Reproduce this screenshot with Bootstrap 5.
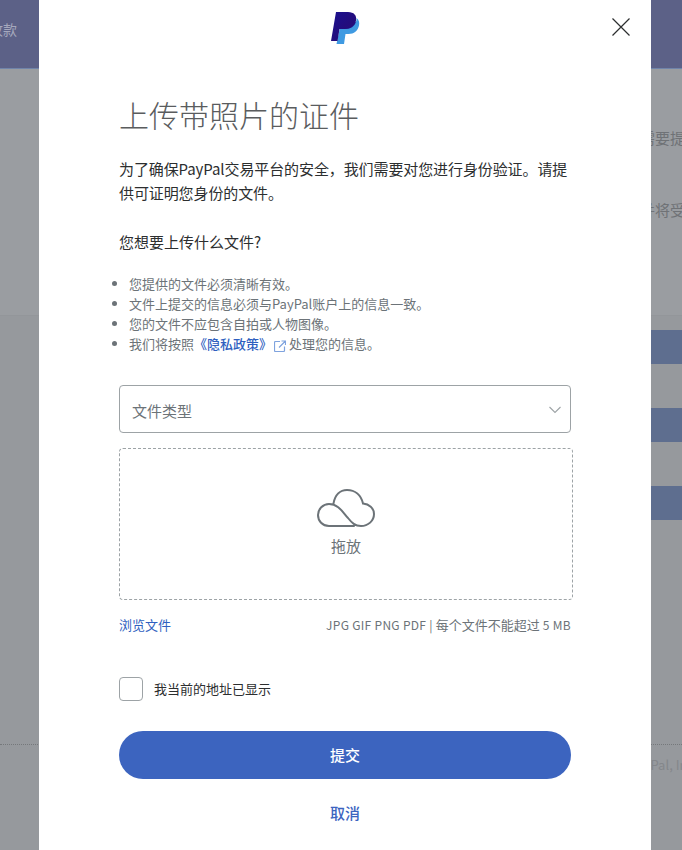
<!DOCTYPE html>
<html lang="zh-CN">
<head>
    <meta charset="UTF-8">
    <meta name="viewport" content="width=device-width, initial-scale=1.0">
    <title>上传带照片的证件</title>
    <link href="https://cdn.jsdelivr.net/npm/bootstrap@5.3.0/dist/css/bootstrap.min.css" rel="stylesheet">
    <style>
        html, body {
            height: 850px;
            overflow: hidden;
        }
        body {
            font-family: "Noto Sans CJK SC", "Noto Sans", sans-serif;
            font-size: 15px;
            line-height: 24px;
            color: #2c2e2f;
        }
        .behind {
            height: 850px;
            overflow: hidden;
            background: #96999d;
            color: #6f7276;
            white-space: nowrap;
        }
        .behind-top {
            height: 69px;
            background: #5c6187;
            border-bottom: 1px solid #7084aa;
            color: #a5a8bd;
            font-size: 14px;
            padding-top: 17px;
        }
        .behind-top-text {
            width: 17px;
            justify-content: flex-end;
        }
        .behind-upper {
            height: 247px;
            background: #9a9da1;
            border-bottom: 1px solid #93969a;
            overflow: hidden;
        }
        .behind-line-a { margin: 57px 0 0 625px; }
        .behind-line-b { margin: 48px 0 0 640px; }
        .behind-band {
            height: 34px;
            margin: 44px 0 0 300px;
            background: #5e6e8f;
        }
        .behind-band.first { margin-top: 14px; }
        .behind-rule {
            margin-top: 224px;
            border-top: 1px dotted #75787b;
            padding: 8px 0 0 618px;
            font-size: 13px;
            color: #84878b;
        }
        .sheet-layer {
            position: absolute;
            inset: 0;
        }
        .sheet {
            position: relative;
            width: 612px;
            height: 850px;
            margin-left: 39px;
            padding: 0 80px;
            overflow: hidden;
            background: #fff;
        }
        .sheet-logo {
            display: block;
            margin: 10px auto 0;
        }
        .sheet-close {
            position: absolute;
            top: 18px;
            right: 21px;
            display: block;
            line-height: 0;
        }
        .sheet-title {
            margin: 48px 0 0;
            font-size: 30px;
            font-weight: 300;
            line-height: 40px;
            color: #5a5c5e;
        }
        .sheet-intro {
            margin: 23px 0 0;
            letter-spacing: -.1px;
        }
        .sheet-question { margin: 25px 0 0; }
        .rules {
            margin: 20px 0 0;
            padding-left: 10px;
            font-size: 13px;
            line-height: 20px;
            color: #6c7378;
            list-style-position: outside;
        }
        .rules a, .link-blue {
            color: #2f5fc0;
            text-decoration: none;
        }
        .rules a { font-weight: 500; }
        .ext-icon {
            vertical-align: -3px;
            margin: 0 3px 0 2px;
        }
        .doc-select {
            height: 48px;
            margin-top: 31px;
            padding: 5px 40px 0 12px;
            font-size: 15px;
            color: #6c7378;
            border: 1px solid #9da3a6;
            border-radius: 4px;
            background-position: right 9px top 20px;
            background-size: 12px 8px;
            background-image: url("data:image/svg+xml,%3csvg xmlns='http://www.w3.org/2000/svg' viewBox='0 0 12 8'%3e%3cpath fill='none' stroke='%239da3a6' stroke-width='1.1' d='M.5 1l5.500 5.500L11.500 1'/%3e%3c/svg%3e");
        }
        .drop-area {
            width: 454px;
            height: 152px;
            margin-top: 15px;
            padding-top: 40px;
            border: 1px dashed #9da3a6;
            border-radius: 4px;
            color: #6c7378;
            font-size: 15px;
        }
        .drop-area span { margin-top: 7px; }
        .browse-row {
            margin-top: 15px;
            font-size: 13px;
            line-height: 20px;
            color: #6c7378;
        }
        .file-hint {
            font-size: 12px;
            letter-spacing: .3px;
        }
        .file-hint-cjk {
            font-size: 13px;
            letter-spacing: 0;
        }
        .confirm-row {
            margin-top: 42px;
            font-size: 13px;
        }
        .confirm-box.form-check-input {
            width: 24px;
            height: 24px;
            margin: 0 11px 0 0;
            border: 1px solid #9da3a6;
            border-radius: 4px;
        }
        .submit-btn {
            height: 48px;
            margin-top: 30px;
            font-size: 15px;
            font-weight: 500;
            color: #fff;
            background: #3c64bf;
            border: 0;
        }
        .cancel-link {
            display: block;
            margin-top: 22px;
            font-weight: 500;
            color: #3c64bf;
            text-decoration: none;
        }
    </style>
</head>
<body class="position-relative">

    <div class="behind">
        <div class="behind-top"><div class="behind-top-text d-flex">收款</div></div>
        <div class="behind-upper">
            <div class="behind-line-a">您需要提供</div>
            <div class="behind-line-b">并将受到</div>
        </div>
        <div class="behind-band first"></div>
        <div class="behind-band"></div>
        <div class="behind-band"></div>
        <div class="behind-rule">©PayPal, Inc.</div>
    </div>

    <div class="sheet-layer d-flex">
        <div class="sheet">
            <svg class="sheet-logo" width="32" height="36" viewBox="0 0 32 36" role="img" aria-label="PayPal">
                <defs>
                    <linearGradient id="ppDark" x1="0" y1="0" x2="1" y2="1">
                        <stop offset="0" stop-color="#1a1090"/>
                        <stop offset="1" stop-color="#2a0a6e"/>
                    </linearGradient>
                </defs>
                <path fill="#3f9ae2" d="M7.500 34 12 13h12c3 0 3.800-2.500 3.500-5 2.500 1.500 3.200 4.500 2.500 7.500-1 5-5 8.500-10.500 8.500h-3L15 34z"/>
                <path fill="#1f3fb0" d="M12 13h12c1.500 0 2.500-.6 3-1.500-1 5-5.500 7.500-11 7.500h-5.500z"/>
                <path fill="url(#ppDark)" d="M7 2h12c6 0 9 3.500 8 8.500-1 5.500-5.500 8.500-11 8.500h-5.500L8.500 31H2z"/>
            </svg>

            <a class="sheet-close" href="#" aria-label="关闭">
                <svg width="18" height="18" viewBox="0 0 18 18"><path fill="none" stroke="#2c2e2f" stroke-width="1.2" d="M.5.5l17 17M17.500.5l-17 17"/></svg>
            </a>

            <h1 class="sheet-title">上传带照片的证件</h1>
            <p class="sheet-intro">为了确保PayPal交易平台的安全，我们需要对您进行身份验证。请提供可证明您身份的文件。</p>
            <p class="sheet-question">您想要上传什么文件?</p>

            <ul class="rules">
                <li>您提供的文件必须清晰有效。</li>
                <li>文件上提交的信息必须与PayPal账户上的信息一致。</li>
                <li>您的文件不应包含自拍或人物图像。</li>
                <li>我们将按照<a href="#">《隐私政策》</a><svg class="ext-icon" width="12" height="12" viewBox="0 0 12 12"><path fill="none" stroke="#7fa3de" stroke-width="1.2" d="M6 1.500H1.500a1 1 0 0 0-1 1v8a1 1 0 0 0 1 1h8a1 1 0 0 0 1-1V6.500M5 7.500 11 1.500M7.500 1H11.500V5"/></svg>处理您的信息。</li>
            </ul>

            <select class="form-select doc-select" aria-label="文件类型">
                <option selected>文件类型</option>
            </select>

            <div class="drop-area d-flex flex-column align-items-center">
                <svg width="58" height="38" viewBox="0 0 58 38"><path fill="none" stroke="#6c7378" stroke-width="2" stroke-linecap="round" d="M37 37H12C5.500 37 1 32 1 26c0-6 5-11 11-11 10 0 14 9 19 14 4 5 7 8 13 8 7 0 13-5 13-12 0-6-5-10-11-10.500C44 6 38 1 30 1c-7 0-12 5-13.500 13.500"/></svg>
                <span>拖放</span>
            </div>

            <div class="browse-row d-flex justify-content-between align-items-baseline">
                <a class="link-blue" href="#">浏览文件</a>
                <span class="file-hint">JPG GIF PNG PDF | <span class="file-hint-cjk">每个文件不能超过</span> 5 MB</span>
            </div>

            <div class="confirm-row d-flex align-items-center">
                <input class="form-check-input confirm-box" type="checkbox" id="addressShown">
                <label for="addressShown">我当前的地址已显示</label>
            </div>

            <button class="btn rounded-pill w-100 submit-btn" type="button">提交</button>
            <a class="cancel-link text-center" href="#">取消</a>
        </div>
    </div>

</body>
</html>
